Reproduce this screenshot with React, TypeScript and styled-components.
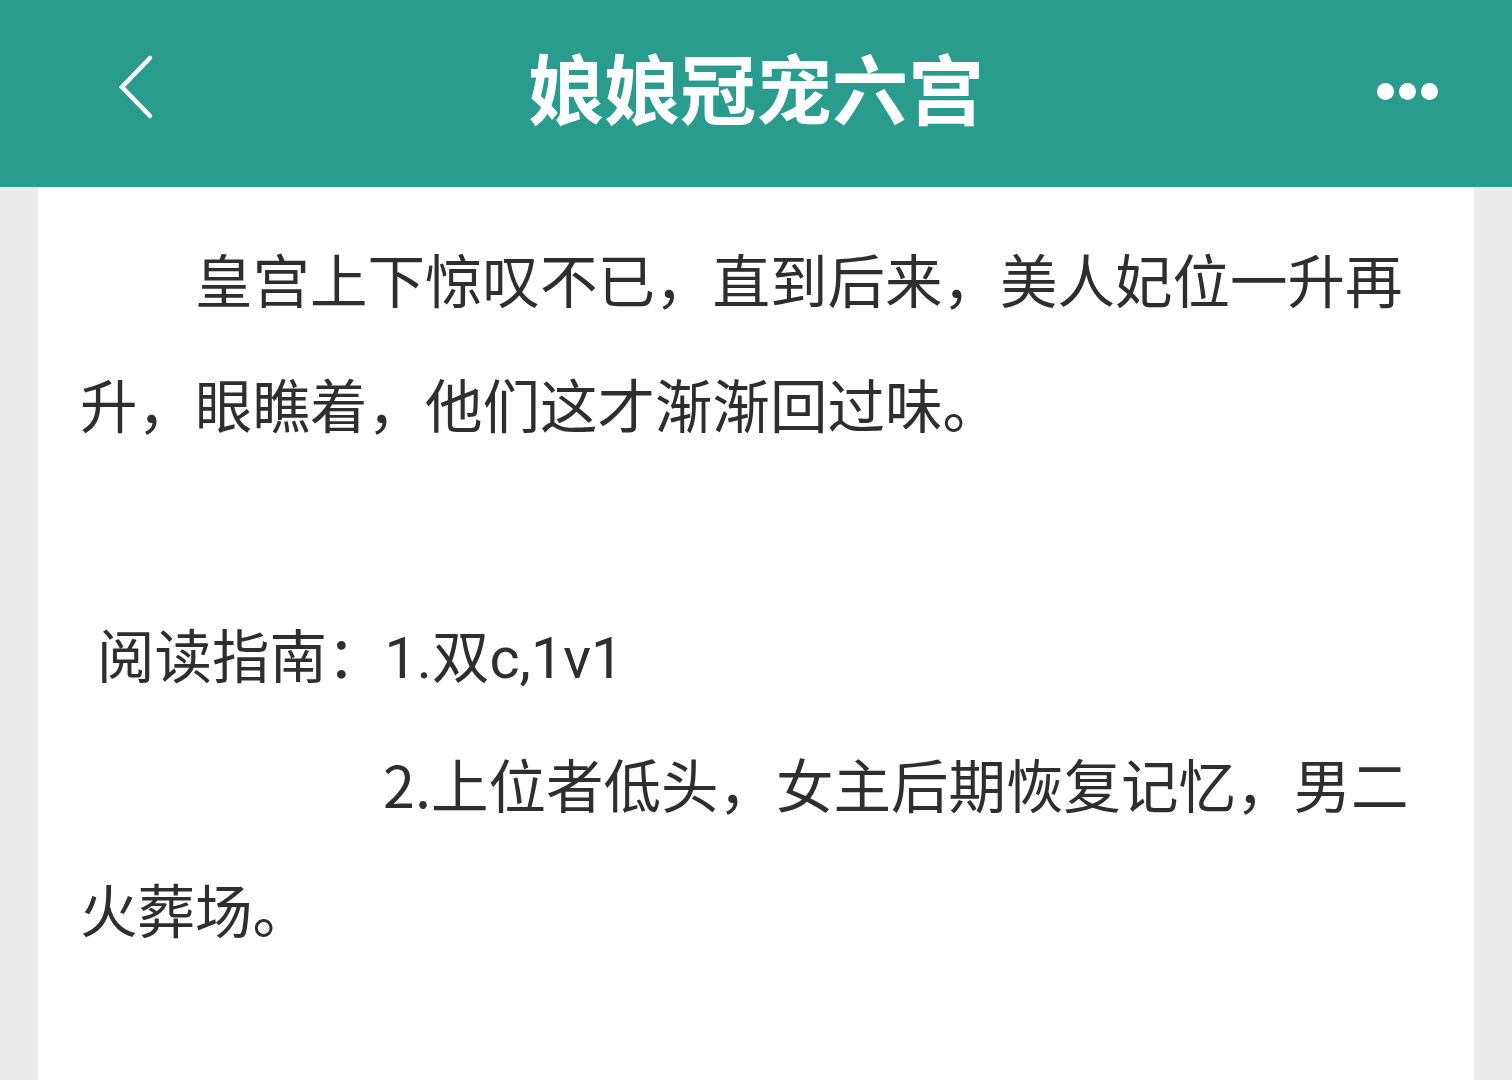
import styled, { createGlobalStyle } from "styled-components";

const GlobalStyle = createGlobalStyle`
  html, body {
    margin: 0;
    padding: 0;
    background: #ebebeb;
  }
  body {
    font-family: "Noto Sans CJK SC", "Noto Sans", sans-serif;
  }
`;

const Page = styled.div`
  height: 1080px;
  display: flex;
  flex-direction: column;
  overflow: hidden;
`;

const TopBar = styled.header`
  flex: 0 0 187px;
  background: #299c8e;
  display: grid;
  grid-template-columns: 270px 1fr 270px;
  align-items: center;
`;

const BackButton = styled.button`
  justify-self: start;
  margin-left: 110px;
  margin-bottom: 12px;
  width: 50px;
  height: 70px;
  padding: 0;
  border: none;
  background: none;
  display: flex;
  align-items: center;
  justify-content: center;
`;

const MoreButton = styled.button`
  justify-self: end;
  margin-right: 74px;
  margin-bottom: 4px;
  height: 40px;
  padding: 0;
  border: none;
  background: none;
  display: flex;
  gap: 5px;
  align-items: center;
`;

const Dot = styled.span`
  width: 17px;
  height: 17px;
  border-radius: 50%;
  background: #fff;
`;

const Title = styled.h1`
  margin: 0 0 16px;
  text-align: center;
  color: #fff;
  font-size: 76px;
  font-weight: 700;
  line-height: 1;
`;

const Body = styled.main`
  flex: 1;
  display: flex;
  padding: 0 38px;
`;

const Sheet = styled.article`
  flex: 1;
  background: #fff;
  padding: 29px 0 0 42px;
`;

const Text = styled.div`
  width: 1345px;
  color: #2e2e2e;
  font-size: 57.5px;
  line-height: 125px;
`;

const Para = styled.p<{ $indent?: string }>`
  margin: 0;
  text-indent: ${(p) => p.$indent ?? "0"};
  min-height: 125px;
`;

const Item = styled.p<{ $pad?: number }>`
  margin: 0;
  padding-left: ${(p) => p.$pad ?? 0}px;
`;

// digits and latin letters use a narrower face than the CJK font
const Latin = styled.span`
  font-family: "Roboto", "Noto Sans CJK SC", sans-serif;
`;

function ChevronLeft() {
  return (
    <svg width="40" height="68" viewBox="0 0 40 68" fill="none">
      <path
        d="M35 4 L7 33 L35 62"
        stroke="#fff"
        strokeWidth="4.5"
        strokeLinecap="round"
        strokeLinejoin="miter"
      />
    </svg>
  );
}

export default function App() {
  return (
    <>
      <GlobalStyle />
      <Page>
        <TopBar>
          <BackButton aria-label="返回">
            <ChevronLeft />
          </BackButton>
          <Title>娘娘冠宠六宫</Title>
          <MoreButton aria-label="更多">
            <Dot />
            <Dot />
            <Dot />
          </MoreButton>
        </TopBar>
        <Body>
          <Sheet>
            <Text>
              <Para $indent="2em">
                皇宫上下惊叹不已，直到后来，美人妃位一升再升，眼瞧着，他们这才渐渐回过味。
              </Para>
              <Para />
              <Item $pad={17}>
                阅读指南：<Latin>1.</Latin>双<Latin>c,1v1</Latin>
              </Item>
              <Para $indent="303px">
                2.上位者低头，女主后期恢复记忆，男二火葬场。
              </Para>
            </Text>
          </Sheet>
        </Body>
      </Page>
    </>
  );
}
